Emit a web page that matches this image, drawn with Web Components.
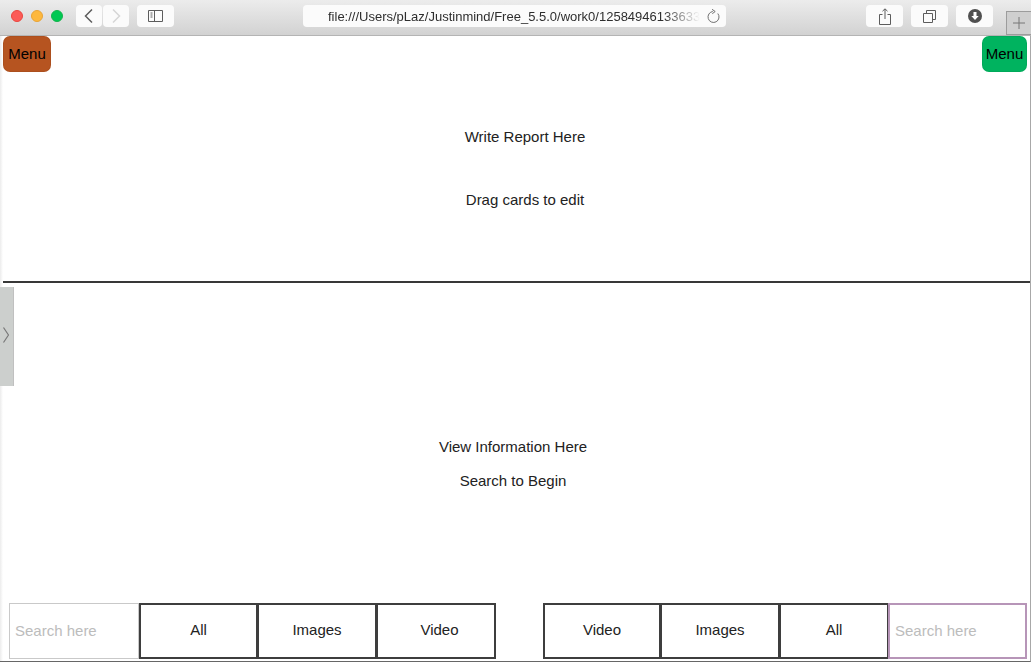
<!DOCTYPE html>
<html>
<head>
<meta charset="utf-8">
<title>Report</title>
<style>
html, body { margin: 0; height: 100%; background: #fff; overflow: hidden; }
body { font-family: "Liberation Sans", Arial, sans-serif; font-size: 15px; color: #222; display: flex; flex-direction: column; height: 662px; }
main-page { flex: 1; }
.ico { display: block; }
</style>
</head>
<body>

<browser-bar url="file:///Users/pLaz/Justinmind/Free_5.5.0/work0/12584946133633">
  <bar-button slot="nav" wide="26">
    <svg class="ico" width="12" height="16" viewBox="0 0 12 16" fill="none" stroke="#5c5c5c" stroke-width="1.5"><path d="M9 1.500 2.500 8 9 14.500"/></svg>
  </bar-button>
  <bar-button slot="nav" wide="26">
    <svg class="ico" width="12" height="16" viewBox="0 0 12 16" fill="none" stroke="#d6d6d6" stroke-width="1.5"><path d="M3 1.500 9.500 8 3 14.500"/></svg>
  </bar-button>
  <bar-button slot="side" wide="37">
    <svg class="ico" width="15" height="12" viewBox="0 0 15 12" fill="none" stroke="#5c5c5c"><path d="M.5.500h14v11H.5zM6.500.500v11"/><path d="M2.500 3h2M2.500 5h2M2.500 7h2"/></svg>
  </bar-button>
  <bar-button slot="tools" wide="37">
    <svg class="ico" width="12" height="17" viewBox="0 0 12 17" fill="none" stroke="#5c5c5c"><path d="M3.500 6.500H.5v10h11v-10H8.500M6 11V1M3.500 3.200 6 .8l2.500 2.400"/></svg>
  </bar-button>
  <bar-button slot="tools" wide="37">
    <svg class="ico" width="13" height="13" viewBox="0 0 13 13" fill="none" stroke="#5c5c5c"><path d="M.5 3.500h9v9h-9zM3.500 3.500v-3h9v9h-3"/></svg>
  </bar-button>
  <bar-button slot="tools" wide="37">
    <svg class="ico" width="14" height="14" viewBox="0 0 14 14"><circle cx="7" cy="7" r="7" fill="#505050"/><path d="M5.500 3h3v4h2.200L7 11 3.300 7h2.200z" fill="#fff"/></svg>
  </bar-button>
</browser-bar>

<main-page>
  <menu-button slot="left" color="#b65420" wide="48">Menu</menu-button>
  <menu-button slot="right" color="#00b35f" wide="45">Menu</menu-button>
  <span slot="report">Write Report Here</span>
  <span slot="report">Drag cards to edit</span>
  <span slot="info">View Information Here</span>
  <span slot="info">Search to Begin</span>
  <search-bar slot="search-left">
    <search-box line="#c9c9c9" wide="130"></search-box>
    <filter-button wide="119" style="margin-left:0">All</filter-button>
    <filter-button wide="120">Images</filter-button>
    <filter-button wide="120" style="padding-left:7px">Video</filter-button>
  </search-bar>
  <search-bar slot="search-right">
    <filter-button wide="118" style="margin-left:0">Video</filter-button>
    <filter-button wide="120">Images</filter-button>
    <filter-button wide="110">All</filter-button>
    <search-box line="#b795b8" wide="139" thick="2" style="margin-left:-1px"></search-box>
  </search-bar>
</main-page>

<script>
const barTemplate = document.createElement('template');
barTemplate.innerHTML = `
<style>
:host{
    display: flex;
    align-items: flex-start;
    height: 35px;
    flex: none;
    background: linear-gradient(#ececec, #d2d2d2);
    border-bottom: 1px solid #b4b4b4;
    position: relative;
}
.lights{
    display: flex;
    gap: 8px;
    padding: 10px 0 0 11px;
    width: 76px;
    box-sizing: border-box;
}
.lights i{
    width: 12px;
    height: 12px;
    border-radius: 50%;
    box-sizing: border-box;
}
.nav, .tools{
    display: flex;
    gap: 1px;
    padding-top: 5px;
}
.tools{
    gap: 8px;
    margin-left: 140px;
}
.side{
    padding: 5px 0 0 8px;
}
.address{
    margin: 5px 0 0 129px;
    width: 423px;
    height: 22px;
    border-radius: 4px;
    background: #fbfbfb;
    display: flex;
    align-items: center;
    font-size: 13px;
    color: #2e2e2e;
    box-sizing: border-box;
    padding-left: 25px;
}
.url{
    width: 372px;
    flex: none;
    overflow: hidden;
    white-space: nowrap;
    -webkit-mask-image: linear-gradient(90deg, #000 90%, transparent);
}
.address svg{
    margin-left: 6px;
    flex: none;
}
.plus{
    position: absolute;
    left: 1006px;
    top: 11px;
    width: 25px;
    height: 24px;
    box-sizing: border-box;
    border: 1px solid #9c9c9c;
    border-right: 0;
    background: #cfcfcf;
}
.plus svg{
    display: block;
    margin: 5px 0 0 6px;
}
</style>
<div class="lights">
  <i style="background:#fc5b57;border:1px solid #e9463f"></i>
  <i style="background:#fdb83e;border:1px solid #e8a437"></i>
  <i style="background:#00c853;border:1px solid #14b44b"></i>
</div>
<div class="nav"><slot name="nav"></slot></div>
<div class="side"><slot name="side"></slot></div>
<div class="address">
  <span class="url"></span>
  <svg width="14" height="14" viewBox="0 0 14 14" fill="none" stroke="#707070"><path d="M11.800 4.500A5.500 5.500 0 1 1 6.800 2.500"/><path d="M6 .3 9.200 2.500 6.300 4.700"/></svg>
</div>
<div class="tools"><slot name="tools"></slot></div>
<div class="plus"><svg width="12" height="12" viewBox="0 0 12 12" stroke="#777"><path d="M6 0v12M0 6h12"/></svg></div>
`;

class BrowserBar extends HTMLElement {
    constructor(){
        super();
        this.attachShadow({ mode: 'open' }).appendChild(barTemplate.content.cloneNode(true));
    }
    connectedCallback(){
        this.shadowRoot.querySelector('.url').textContent = this.getAttribute('url');
    }
}
customElements.define('browser-bar', BrowserBar);

class BarButton extends HTMLElement {
    constructor(){
        super();
        this.attachShadow({ mode: 'open' }).innerHTML = `
<style>
:host{
    display: flex;
    align-items: center;
    justify-content: center;
    height: 22px;
    border-radius: 4px;
    background: #fbfbfb;
}
</style>
<slot></slot>`;
    }
    connectedCallback(){
        this.style.width = this.getAttribute('wide') + 'px';
    }
}
customElements.define('bar-button', BarButton);

class MenuButton extends HTMLElement {
    constructor(){
        super();
        this.attachShadow({ mode: 'open' }).innerHTML = `
<style>
:host{
    display: flex;
    align-items: center;
    justify-content: center;
    height: 36px;
    padding-bottom: 2px;
    border-radius: 7px;
    box-shadow: inset 0 0 0 1px rgba(0,0,0,.05);
    box-sizing: border-box;
    font-size: 15px;
    color: #000;
    background: var(--menu-color);
}
</style>
<slot></slot>`;
    }
    connectedCallback(){
        this.style.setProperty('--menu-color', this.getAttribute('color'));
        this.style.width = this.getAttribute('wide') + 'px';
    }
}
customElements.define('menu-button', MenuButton);

const pageTemplate = document.createElement('template');
pageTemplate.innerHTML = `
<style>
:host{
    display: flex;
    flex-direction: column;
    position: relative;
    padding-left: 3px;
    background: linear-gradient(90deg, #ececec 0, #fff 3px);
    border-bottom: 1px solid #666;
    border-right: 1px solid #a8a8a8;
    box-sizing: border-box;
    min-height: 0;
}
.report{
    height: 247px;
    box-sizing: border-box;
    border-bottom: 2px solid #383838;
    flex: none;
}
.menus{
    display: flex;
    justify-content: space-between;
    padding-right: 3px;
}
.report .texts{
    display: flex;
    flex-direction: column;
    align-items: center;
    gap: 46px;
    padding: 56px 0 0 17px;
}
.info{
    flex: 1;
    display: flex;
    flex-direction: column;
    min-height: 0;
}
.info .texts{
    display: flex;
    flex-direction: column;
    align-items: center;
    gap: 17px;
    padding: 155px 7px 0 0;
    flex: 1;
}
.searches{
    display: flex;
    justify-content: space-between;
    padding: 0 3px 2px 6px;
}
.tab{
    position: absolute;
    left: 0;
    top: 251px;
    width: 14px;
    height: 99px;
    padding-bottom: 4px;
    background: #cccfcd;
    border-right: 1px solid #c0c0c0;
    box-sizing: border-box;
    display: flex;
    align-items: center;
}
.tab svg{
    margin-left: 3px;
}
</style>
<section class="report">
  <div class="menus"><slot name="left"></slot><slot name="right"></slot></div>
  <div class="texts"><slot name="report"></slot></div>
</section>
<section class="info">
  <div class="texts"><slot name="info"></slot></div>
  <div class="searches"><slot name="search-left"></slot><slot name="search-right"></slot></div>
</section>
<div class="tab"><svg width="6" height="16" viewBox="0 0 6 16" fill="none" stroke="#777" stroke-width="1.2"><path d="M.5.500 5.500 8 .5 15.500"/></svg></div>
`;

class MainPage extends HTMLElement {
    constructor(){
        super();
        this.attachShadow({ mode: 'open' }).appendChild(pageTemplate.content.cloneNode(true));
    }
}
customElements.define('main-page', MainPage);

class SearchBar extends HTMLElement {
    constructor(){
        super();
        this.attachShadow({ mode: 'open' }).innerHTML = `
<style>
:host{
    display: flex;
    height: 56px;
}
</style>
<slot></slot>`;
    }
}
customElements.define('search-bar', SearchBar);

class SearchBox extends HTMLElement {
    constructor(){
        super();
        this.attachShadow({ mode: 'open' }).innerHTML = `
<style>
:host{
    display: flex;
    align-items: center;
    box-sizing: border-box;
    border: var(--thick, 1px) solid var(--line);
    padding: 0 0 2px 5px;
    color: #bcbcbc;
    font-size: 15px;
}
</style>
<span>Search here</span>`;
    }
    connectedCallback(){
        this.style.setProperty('--line', this.getAttribute('line'));
        if(this.hasAttribute('thick'))
            this.style.setProperty('--thick', this.getAttribute('thick') + 'px');
        this.style.width = this.getAttribute('wide') + 'px';
    }
}
customElements.define('search-box', SearchBox);

class FilterButton extends HTMLElement {
    constructor(){
        super();
        this.attachShadow({ mode: 'open' }).innerHTML = `
<style>
:host{
    display: flex;
    align-items: center;
    justify-content: center;
    box-sizing: border-box;
    border: 2px solid #3e3e3e;
    margin-left: -1px;
    padding-bottom: 4px;
    font-size: 15px;
    color: #222;
}
</style>
<slot></slot>`;
    }
    connectedCallback(){
        this.style.width = this.getAttribute('wide') + 'px';
    }
}
customElements.define('filter-button', FilterButton);
</script>
</body>
</html>
